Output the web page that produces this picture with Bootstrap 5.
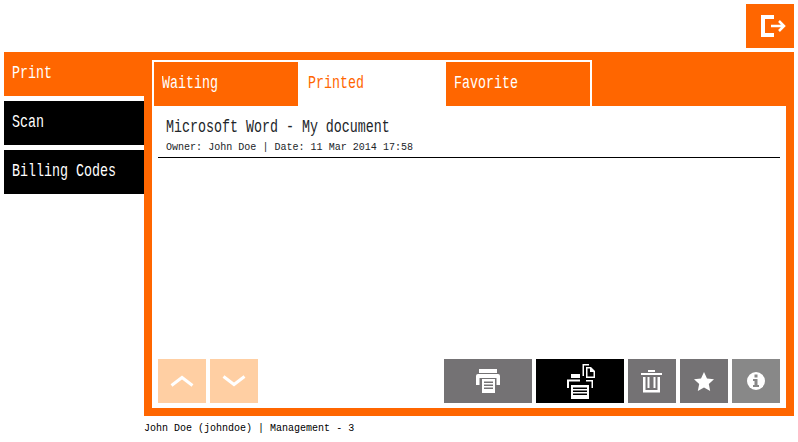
<!DOCTYPE html>
<html lang="en">
<head>
  <meta charset="UTF-8" />
  <meta name="viewport" content="width=device-width, initial-scale=1" />
  <title>Print Release</title>
  <link href="https://cdn.jsdelivr.net/npm/bootstrap@5.3.3/dist/css/bootstrap.min.css" rel="stylesheet" />
  <style>
    body {
      background-color: #fff;
      color: #000;
      font-family: "Liberation Mono", monospace;
      overflow: hidden;
    }
    /* the screenshot font is a tall narrow mono, so squeeze Liberation Mono */
    .big-text, .meta-text, .status-text {
      display: inline-block;
      white-space: nowrap;
      transform-origin: left center;
    }
    .big-text {
      font-size: 18px;
      line-height: 20px;
      transform: scaleX(.74);
    }
    .meta-text {
      font-size: 11.5px;
      line-height: 14px;
      transform: scaleX(.873);
    }
    .status-text {
      font-size: 11.5px;
      line-height: 14px;
      transform: scaleX(.87);
    }
    .top-bar {
      height: 52px;
      padding: 4px;
    }
    .square-btn {
      display: flex;
      align-items: center;
      justify-content: center;
      width: 48px;
      height: 44px;
      padding: 0;
      border: none;
      border-radius: 0;
      color: #fff;
    }
    .square-btn:hover, .square-btn:disabled {
      color: #fff;
      border: none;
    }
    .wide-btn {
      width: 88px;
    }
    .btn-logout, .btn-logout:hover {
      background-color: #ff6600;
    }
    .btn-arrow, .btn-arrow:disabled {
      background-color: #ffcfa3;
      opacity: 1;
    }
    .btn-grey, .btn-grey:hover {
      background-color: #747274;
    }
    .btn-info-grey, .btn-info-grey:hover {
      background-color: #888;
    }
    .btn-black, .btn-black:hover {
      background-color: #000;
    }
    .main-row {
      height: 364px;
      margin: 0 4px;
    }
    .side-nav {
      width: 140px;
      flex-shrink: 0;
    }
    .side-nav .nav-link {
      width: 140px;
      height: 44px;
      margin-bottom: 5px;
      padding: 10px 8px;
      border-radius: 0;
      background-color: #000;
      color: #fff;
    }
    .side-nav .nav-link.active {
      background-color: #ff6600;
      color: #fff;
    }
    .panel {
      flex-grow: 1;
      border: 8px solid #ff6600;
      background-color: #fff;
    }
    .tab-strip {
      height: 46px;
      background-color: #ff6600;
    }
    .tab-strip .nav-tabs {
      width: 440px;
      border: 2px solid #fff;
      border-bottom: none;
    }
    .tab-strip .nav-link {
      width: 144px;
      height: 44px;
      margin: 0;
      padding: 10px 8px;
      border: none;
      border-radius: 0;
      background-color: #ff6600;
      color: #fff;
    }
    .tab-strip .nav-link.active {
      width: 148px;
      padding-left: 10px;
      background-color: #fff;
      color: #ff6600;
    }
    .job-list .list-group-item {
      height: 52px;
      margin: 0 6px;
      padding: 11px 8px 0;
      border: none;
      border-bottom: 1px solid #000;
      border-radius: 0;
    }
    .job-meta {
      height: 14px;
      margin-top: 3px;
    }
    .action-row {
      height: 44px;
      margin: 0 6px 5px;
    }
    .gap-4px {
      gap: 4px;
    }
    .status-line {
      margin: 5px 0 0 144px;
    }
  </style>
</head>
<body>
  <div class="top-bar d-flex justify-content-end">
    <button class="btn square-btn btn-logout" type="button" aria-label="Log out">
      <svg width="48" height="44" viewBox="0 0 48 44" fill="none" stroke="#fff">
        <path d="M28 13H17V31H28" stroke-width="4" />
        <path d="M25 22H38M33 17L38 22L33 27" stroke-width="2.500" />
      </svg>
    </button>
  </div>

  <div class="main-row d-flex">
    <nav class="side-nav nav flex-column">
      <a class="nav-link active" href="#"><span class="big-text">Print</span></a>
      <a class="nav-link" href="#"><span class="big-text">Scan</span></a>
      <a class="nav-link" href="#"><span class="big-text">Billing Codes</span></a>
    </nav>

    <div class="panel d-flex flex-column">
      <div class="tab-strip">
        <ul class="nav nav-tabs">
          <li class="nav-item"><a class="nav-link" href="#"><span class="big-text">Waiting</span></a></li>
          <li class="nav-item"><a class="nav-link active" href="#"><span class="big-text">Printed</span></a></li>
          <li class="nav-item"><a class="nav-link" href="#"><span class="big-text">Favorite</span></a></li>
        </ul>
      </div>

      <div class="job-list list-group flex-grow-1">
        <div class="list-group-item">
          <div class="d-flex"><span class="big-text">Microsoft Word - My document</span></div>
          <div class="job-meta d-flex"><span class="meta-text">Owner: John Doe | Date: 11 Mar 2014 17:58</span></div>
        </div>
      </div>

      <div class="action-row d-flex justify-content-between">
        <div class="d-flex gap-4px">
          <button class="btn square-btn btn-arrow" type="button" disabled aria-label="Up">
            <svg width="24" height="12" viewBox="0 0 24 12" fill="none" stroke="#fff" stroke-width="3"><path d="M1.500 10.500L12 2.500L22.500 10.500" /></svg>
          </button>
          <button class="btn square-btn btn-arrow" type="button" disabled aria-label="Down">
            <svg width="24" height="12" viewBox="0 0 24 12" fill="none" stroke="#fff" stroke-width="3"><path d="M1.500 1.500L12 9.500L22.500 1.500" /></svg>
          </button>
        </div>
        <div class="d-flex gap-4px">
          <button class="btn square-btn wide-btn btn-grey" type="button" aria-label="Print">
            <svg width="24" height="24" viewBox="0 0 24 24" fill="#fff">
              <path d="M3 0H21V4H3Z" />
              <path d="M2 5H22Q24 5 24 7V16H20.500V9H3.500V16H0V7Q0 5 2 5Z" />
              <path d="M6 10H19V24H6ZM8 12.500V14H17V12.500ZM8 15.500V17H17V15.500ZM8 18.500V20H17V18.500Z" fill-rule="evenodd" />
            </svg>
          </button>
          <button class="btn square-btn wide-btn btn-black" type="button" aria-label="Print copies">
            <svg width="30" height="36" viewBox="0 0 30 36" fill="#fff">
              <path d="M17.500 1H24V2.500H19V13H17.500Z" />
              <path d="M21 4H26L30 8V15H21ZM22.500 5.500V13.500H28.500V9H25V5.500Z" fill-rule="evenodd" />
              <path d="M6 11H15V15H6Z" />
              <path d="M2 16.500H15V18.500H4V25H2ZM21 17H28V25H26.500V18.500H21Z" />
              <path d="M6 22H24V36H6ZM8 24.500V26H22V24.500ZM8 27.500V29H22V27.500ZM8 30.500V32H22V30.500Z" fill-rule="evenodd" />
            </svg>
          </button>
          <button class="btn square-btn btn-grey" type="button" aria-label="Delete">
            <svg width="22" height="23" viewBox="0 0 22 23" fill="#fff">
              <path d="M7 0H14V2H7ZM0 3H21V5H0Z" />
              <path d="M2 7H4.500V20H16.500V7H19V22.500H2Z" />
              <path d="M6.500 7H8.500V18H6.500ZM12.500 7H14.500V18H12.500Z" />
            </svg>
          </button>
          <button class="btn square-btn btn-grey" type="button" aria-label="Favorite">
            <svg width="20" height="19" viewBox="0 0 20 19" fill="#fff"><path d="M10 0L13 6.500L20 7.300L14.800 12L16.200 19L10 15.500L3.800 19L5.200 12L0 7.300L7 6.500Z" /></svg>
          </button>
          <button class="btn square-btn btn-info-grey" type="button" aria-label="Details">
            <svg width="18" height="18" viewBox="0 0 18 18"><circle cx="9" cy="9" r="9" fill="#fff" /><path d="M7.500 2.500H10.500V5.500H7.500ZM6 7H10.500V13H12V15H6V13H7.500V9H6Z" fill="#888" /></svg>
          </button>
        </div>
      </div>
    </div>
  </div>

  <div class="status-line d-flex"><span class="status-text">John Doe (johndoe) | Management - 3</span></div>

  <script src="https://cdn.jsdelivr.net/npm/bootstrap@5.3.3/dist/js/bootstrap.bundle.min.js"></script>
</body>
</html>
